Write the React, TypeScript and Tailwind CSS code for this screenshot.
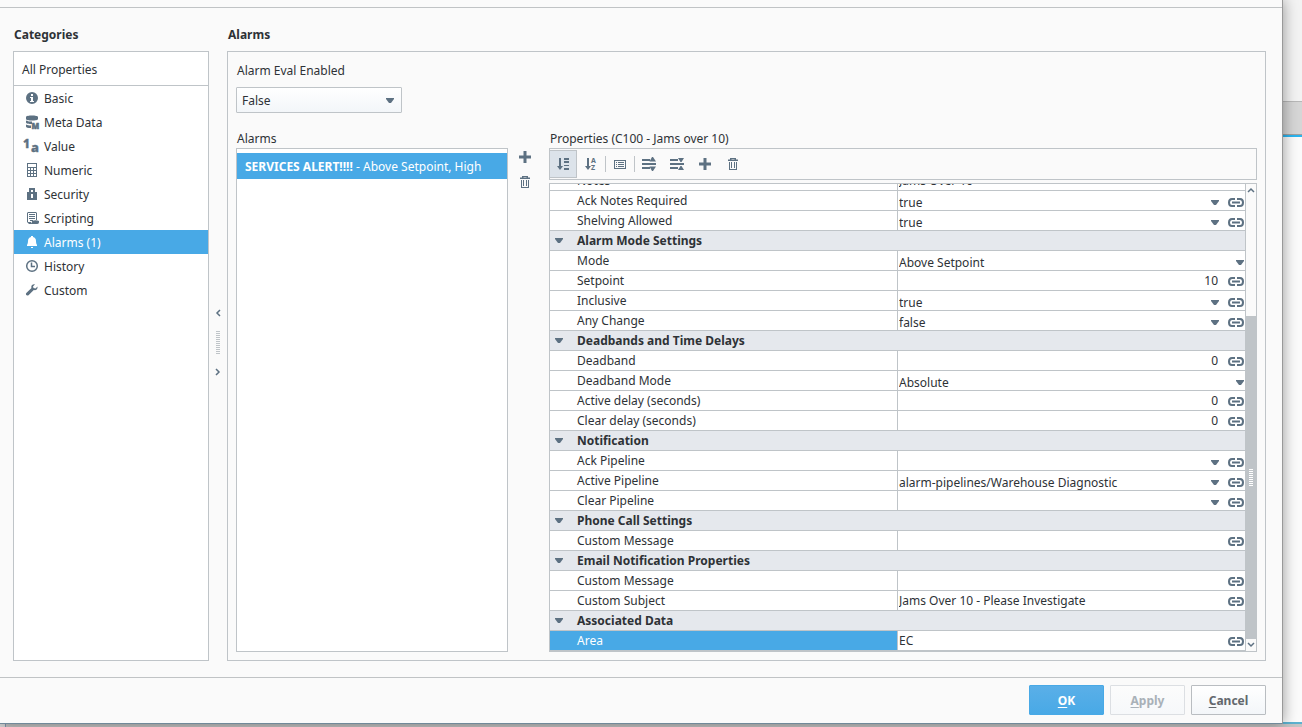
import { useState, type ReactNode } from "react";

const iconClass = "size-4 shrink-0 fill-current";

function PlusIcon() {
  return (
    <svg viewBox="0 0 16 16" className={iconClass}>
      <path d="M6.500 2h3v4.500H14v3H9.500V14h-3V9.500H2v-3h4.500z" />
    </svg>
  );
}

function TrashIcon() {
  return (
    <svg viewBox="0 0 16 16" className={iconClass}>
      <path
        fillRule="evenodd"
        d="M5 2h6v1.500h2V5H3V3.500h2zM6.500 3v.5h3V3z"
      />
      <path d="M4 6h1v7h6V6h1v8H4zM6 6h1v6H6zM9 6h1v6H9z" />
    </svg>
  );
}

function LinkIcon() {
  return (
    <svg viewBox="0 0 16 9" className="h-[9px] w-4" fill="none" stroke="#5d7182" strokeWidth="2">
      <path d="M7 1H4C2 1 1 2.500 1 4.500S2 8 4 8h3M9 1h3c2 0 3 1.500 3 3.500S14 8 12 8H9" />
      <path d="M4 4.500h8" />
    </svg>
  );
}

function CaretDown() {
  return (
    <svg viewBox="0 0 8 5" className="pointer-events-none h-[5px] w-2 shrink-0 fill-[#5d7182]">
      <path d="M0 0h8v1L5 5H3L0 1z" />
    </svg>
  );
}

function Chevron({ d }: { d: string }) {
  return (
    <svg viewBox="0 0 8 8" className="size-2" fill="none" stroke="#5d7182" strokeWidth="1.500">
      <path d={d} />
    </svg>
  );
}

const categories: { label: string; icon: ReactNode }[] = [
  {
    label: "Basic",
    icon: (
      <path
        fillRule="evenodd"
        d="M8 2a6 6 0 1 0 0 12A6 6 0 0 0 8 2zM7 4h2v2H7zM6 7h3v4h1v1H6v-1h1V8H6z"
      />
    ),
  },
  {
    label: "Meta Data",
    icon: (
      <>
        <path d="M2 3c0-2 12-2 12 0v2c0 2-12 2-12 0zM2 6.500c2 1 4 1 6 1V10c-3 0-6-.5-6-1.500zM2 10.500c1.500.8 3 1 5 1V14c-3 0-5-.5-5-1.500z" />
        <text x="7.500" y="14.500" fontSize="8" fontWeight="900" stroke="currentColor" strokeWidth=".5">
          M
        </text>
      </>
    ),
  },
  {
    label: "Value",
    icon: (
      <g fontWeight="800" stroke="currentColor" strokeWidth=".4">
        <text x="-1" y="10" fontSize="12">
          1
        </text>
        <text x="7" y="14" fontSize="13">
          a
        </text>
      </g>
    ),
  },
  {
    label: "Numeric",
    icon: (
      <path
        fillRule="evenodd"
        d="M3 1h10v14H3zM4 2v3h8V2zM4 6v2h2V6zM7 6v2h2V6zM10 6v2h2V6zM4 9v2h2V9zM7 9v2h2V9zM10 9v2h2V9zM4 12v2h2v-2zM7 12v2h2v-2zM10 12v2h2v-2z"
      />
    ),
  },
  {
    label: "Security",
    icon: <path fillRule="evenodd" d="M5 6V2h6v4h2v8H3V6zM7 6h2V4H7zM7 8v4h2V8z" />,
  },
  {
    label: "Scripting",
    icon: (
      <>
        <path fillRule="evenodd" d="M4 2h8l1 1v7h-1V3H4v9h3v2H5l-2-2V3z" />
        <path d="M5 4h6v1H5zM5 6h6v1H5zM5 8h6v1H5zM6 10h3v1H6zM8 11c2-1 5-1 7 0 0 2 0 3-2 3H6c1-1 2-1 2-3z" />
      </>
    ),
  },
  {
    label: "Alarms (1)",
    icon: <path d="M7 2h2v1c2 .5 3 2 3 4 0 2 .5 3 1 4v1H3v-1c.5-1 1-2 1-4 0-2 1-3.500 3-4zM7 13h2v1H7z" />,
  },
  {
    label: "History",
    icon: (
      <g fill="none" stroke="currentColor" strokeWidth="1.500">
        <circle cx="8" cy="8" r="5.300" />
        <path d="M7.500 4.500v4H11" />
      </g>
    ),
  },
  {
    label: "Custom",
    icon: (
      <path d="M13.500 4.500 11.500 6.500 9.500 6 9 4.500l2-2.200C9 1.800 7.300 3 7.300 4.700c0 .5 0 .8.200 1.200L2.300 11c-1.200 1.400.6 3.400 2.200 2.200l5.300-5.100c2.200.6 4.200-1.100 3.700-3.600z" />
    ),
  },
];

type Kind = "drop" | "dropOnly" | "number" | "text";
type Row = { group: string } | { name: string; kind: Kind; value: string; selected?: boolean };

const rows: Row[] = [
  { name: "Ack Notes Required", kind: "drop", value: "true" },
  { name: "Shelving Allowed", kind: "drop", value: "true" },
  { group: "Alarm Mode Settings" },
  { name: "Mode", kind: "dropOnly", value: "Above Setpoint" },
  { name: "Setpoint", kind: "number", value: "10" },
  { name: "Inclusive", kind: "drop", value: "true" },
  { name: "Any Change", kind: "drop", value: "false" },
  { group: "Deadbands and Time Delays" },
  { name: "Deadband", kind: "number", value: "0" },
  { name: "Deadband Mode", kind: "dropOnly", value: "Absolute" },
  { name: "Active delay (seconds)", kind: "number", value: "0" },
  { name: "Clear delay (seconds)", kind: "number", value: "0" },
  { group: "Notification" },
  { name: "Ack Pipeline", kind: "drop", value: "" },
  { name: "Active Pipeline", kind: "drop", value: "alarm-pipelines/Warehouse Diagnostic" },
  { name: "Clear Pipeline", kind: "drop", value: "" },
  { group: "Phone Call Settings" },
  { name: "Custom Message", kind: "text", value: "" },
  { group: "Email Notification Properties" },
  { name: "Custom Message", kind: "text", value: "" },
  { name: "Custom Subject", kind: "text", value: "Jams Over 10 - Please Investigate" },
  { group: "Associated Data" },
  { name: "Area", kind: "text", value: "EC", selected: true },
];

function ValueEditor({ id, kind, value }: { id: string; kind: Kind; value: string }) {
  const isDrop = kind === "drop" || kind === "dropOnly";
  return (
    <div className={`flex h-[19px] items-center gap-[9px] pr-px pl-px ${isDrop ? "pt-[3px]" : "pt-px"}`}>
      {isDrop ? (
        <div className="flex min-w-0 flex-1 items-center">
          <select
            id={id}
            defaultValue={value}
            className="h-[18px] min-w-0 flex-1 appearance-none pt-[2px] leading-4 outline-none"
          >
            <option>{value}</option>
          </select>
          <CaretDown />
        </div>
      ) : (
        <input
          id={id}
          defaultValue={value}
          className={`h-4 min-w-0 flex-1 leading-4 outline-none ${kind === "number" ? "pr-px text-right" : ""}`}
        />
      )}
      {kind !== "dropOnly" && (
        <button type="button" aria-label="Bind property">
          <LinkIcon />
        </button>
      )}
    </div>
  );
}

function PropertyTable() {
  return (
    <table className="w-full table-fixed border-separate border-spacing-0 bg-white">
      <tbody>
        {/* partly scrolled out of view */}
        <tr>
          <td className="border-b border-[#bfc4c8] p-0 pl-[27px]">
            <div className="flex h-[6px] items-end overflow-hidden leading-[19px]">Notes</div>
          </td>
          <td className="w-[348px] border-b border-l border-[#bfc4c8] p-0 pl-px">
            <div className="flex h-[6px] items-end overflow-hidden leading-[19px]">Jams Over 10</div>
          </td>
        </tr>
        {rows.map((row, i) =>
          "group" in row ? (
            <tr key={i} className="bg-[#e5e8ed]">
              <th colSpan={2} className="border-b border-[#bfc4c8] p-0 text-left font-bold">
                <button type="button" className="flex h-[19px] w-full items-center pl-[5px]">
                  <CaretDown />
                  <span className="pl-[14px] leading-[19px]">{row.group}</span>
                </button>
              </th>
            </tr>
          ) : (
            <tr key={i}>
              <td
                className={`border-b border-[#bfc4c8] p-0 pl-[27px] ${
                  row.selected ? "bg-[#48a9e6] text-white" : ""
                }`}
              >
                <label htmlFor={`prop-${i}`} className="block h-[19px] leading-[19px]">
                  {row.name}
                </label>
              </td>
              <td className="border-b border-l border-[#bfc4c8] p-0">
                <ValueEditor id={`prop-${i}`} kind={row.kind} value={row.value} />
              </td>
            </tr>
          )
        )}
      </tbody>
    </table>
  );
}

function Scrollbar() {
  return (
    <div className="flex w-[11px] shrink-0 flex-col border-l border-[#bfc4c8] bg-[#fafafa]">
      <button type="button" aria-label="Scroll up" className="flex h-3 items-center justify-center">
        <Chevron d="M1 6l3-3 3 3" />
      </button>
      <div className="grow-[120] basis-0" />
      <div className="-ml-px flex grow-[324] basis-0 flex-col items-center justify-center gap-px bg-[#bfc4c8]">
        {Array.from({ length: 9 }, (_, i) => (
          <span key={i} className="h-px w-1 bg-white" />
        ))}
      </div>
      <button type="button" aria-label="Scroll down" className="flex h-3 items-center justify-center">
        <Chevron d="M1 2l3 3 3-3" />
      </button>
    </div>
  );
}

const toolButton = "flex h-7 w-7 items-center justify-center";

function Toolbar() {
  return (
    <div className="flex h-8 items-center border border-[#bfc4c8] text-[#5d7182]">
      <button
        type="button"
        aria-label="Categorized"
        className="flex h-7 w-[27px] items-center justify-center border border-l-0 border-[#bfc4c8] bg-[#dce3ea]"
      >
        <svg viewBox="0 0 16 16" className={iconClass}>
          <path d="M4 2h2v8h2l-3 4-3-4h2zM9 2h5v2H9zM9 5h5v2H9zM9 9h5v1H9zM9 12h5v2H9z" />
        </svg>
      </button>
      <button type="button" aria-label="Sort alphabetically" className={toolButton}>
        <svg viewBox="0 0 16 16" className={iconClass}>
          <path d="M4 2h2v8h2l-3 4-3-4h2z" />
          <text x="8" y="7" fontSize="7" fontWeight="700">
            A
          </text>
          <text x="8" y="14" fontSize="7" fontWeight="700">
            Z
          </text>
        </svg>
      </button>
      <span className="h-4 w-px bg-[#bfc4c8]" />
      <button type="button" aria-label="Show description" className={toolButton}>
        <svg viewBox="0 0 16 16" className={iconClass}>
          <path
            fillRule="evenodd"
            d="M2 4h12v9H2zM3 5v7h10V5zM4 6h1v1H4zM6 6h6v1H6zM4 8h1v1H4zM6 8h6v1H6zM4 10h1v1H4zM6 10h6v1H6z"
          />
        </svg>
      </button>
      <span className="h-4 w-px bg-[#bfc4c8]" />
      <button type="button" aria-label="Expand all" className={toolButton}>
        <svg viewBox="0 0 16 16" className={iconClass}>
          <path d="M1 3h8v2H1zM1 7h14v2H1zM1 11h8v2H1zM8.500 5.500 11 1h1l3 4.500zM8.500 10.500H15L12 15h-1z" />
        </svg>
      </button>
      <button type="button" aria-label="Collapse all" className={toolButton}>
        <svg viewBox="0 0 16 16" className={iconClass}>
          <path d="M1 3h8v2H1zM1 7h14v2H1zM1 11h8v2H1zM9 2h6l-2.500 4h-1zM9 14l2.500-4h1l2.500 4z" />
        </svg>
      </button>
      <button type="button" aria-label="Add property" className={toolButton}>
        <PlusIcon />
      </button>
      <button type="button" aria-label="Delete property" className={toolButton}>
        <TrashIcon />
      </button>
    </div>
  );
}

function Categories() {
  const [active, setActive] = useState("Alarms (1)");

  return (
    <section className="flex w-[196px] shrink-0 flex-col pt-4 pb-4">
      <h2 className="mb-[5px] pl-px leading-[22px] font-bold">Categories</h2>
      <nav className="flex-1 border border-[#bfc4c8] bg-white">
        <button type="button" className="block h-[34px] w-full border-b border-[#bfc4c8] pt-[2px] pl-2 text-left">
          All Properties
        </button>
        {categories.map(({ label, icon }) => (
          <button
            key={label}
            type="button"
            onClick={() => setActive(label)}
            className={`flex h-6 w-full items-center gap-1 pl-[10px] ${
              active === label ? "bg-[#48a9e6] text-white" : ""
            }`}
          >
            <svg
              viewBox="0 0 16 16"
              className={`size-4 shrink-0 overflow-visible fill-current ${
                active === label ? "text-white" : "text-[#5d7182]"
              }`}
            >
              {icon}
            </svg>
            <span className="pt-[2px]">{label}</span>
          </button>
        ))}
      </nav>
    </section>
  );
}

function Splitter() {
  return (
    <div className="flex w-[18px] shrink-0 flex-col items-center justify-center gap-[14px]">
      <button type="button" aria-label="Collapse left">
        <Chevron d="M6 1L3 4l3 3" />
      </button>
      <div className="flex flex-col gap-px">
        {Array.from({ length: 12 }, (_, i) => (
          <span key={i} className="h-px w-1 bg-[#bfc4c8]" />
        ))}
      </div>
      <button type="button" aria-label="Collapse right">
        <Chevron d="M2 1l3 3-3 3" />
      </button>
    </div>
  );
}

function AlarmsPanel() {
  return (
    <section className="flex min-w-0 flex-1 flex-col pt-4 pb-4">
      <h2 className="mb-[5px] pl-px leading-[22px] font-bold">Alarms</h2>
      <div className="flex flex-1 flex-col border border-[#bfc4c8] p-2">
        <label htmlFor="eval" className="mb-[5px] pl-px leading-[22px]">
          Alarm Eval Enabled
        </label>
        <div className="mb-[15px] flex h-[26px] w-[166px] items-center rounded-[1px] border border-[#bfc4c8] bg-linear-to-b from-white to-[#f3f6f9] pr-[7px]">
          <select id="eval" defaultValue="False" className="h-6 flex-1 appearance-none pt-[2px] pl-[5px] outline-none">
            <option>False</option>
            <option>True</option>
          </select>
          <CaretDown />
        </div>

        <div className="flex flex-1">
          <div className="flex w-[272px] shrink-0 flex-col">
            <h3 className="h-5 pl-px leading-[22px]">Alarms</h3>
            <div className="flex-1 border border-[#bfc4c8] bg-white pt-1">
              <button type="button" className="h-[26px] w-full bg-[#48a9e6] pt-[2px] pl-2 text-left text-white">
                <b>SERVICES ALERT!!!!</b> - Above Setpoint, High
              </button>
            </div>
          </div>
          <div className="flex w-[41px] shrink-0 flex-col items-center gap-[9px] pt-[21px] pr-[7px] text-[#5d7182]">
            <button type="button" aria-label="Add alarm">
              <PlusIcon />
            </button>
            <button type="button" aria-label="Delete alarm">
              <TrashIcon />
            </button>
          </div>
          <div className="flex min-w-0 flex-1 flex-col">
            <h3 className="h-5 pl-px leading-[22px]">Properties (C100 - Jams over 10)</h3>
            <Toolbar />
            <div className="mt-[3px] flex flex-1 border border-[#bfc4c8]">
              <div className="min-w-0 flex-1">
                <PropertyTable />
              </div>
              <Scrollbar />
            </div>
          </div>
        </div>
      </div>
    </section>
  );
}

export default function App() {
  return (
    <div className="flex min-h-screen flex-col overflow-hidden bg-[#c4c4c4] font-['Noto_Sans',sans-serif] text-[12px] text-[#2e3236]">
      <div className="flex flex-1">
        <main className="relative z-10 flex min-w-0 flex-1 flex-col border-r border-b border-r-[#999] border-b-[#71899a] bg-[#fafafa] shadow-[0_0_14px_rgba(0,0,0,0.4)]">
          <div className="h-2 border-b border-[#c0c3c5]" />
          <div className="flex flex-1 pr-4 pl-[13px]">
            <Categories />
            <Splitter />
            <AlarmsPanel />
          </div>
          <footer className="flex justify-end gap-[6px] border-t border-[#c0c3c5] pt-[7px] pr-4 pb-2 font-bold">
            <button
              type="button"
              className="h-[30px] w-[75px] rounded-[1px] border border-[#48a9e6] bg-linear-to-b from-[#5aafe8] to-[#48a9e6] pt-[2px] text-white"
            >
              <u className="underline-offset-2">O</u>K
            </button>
            <button
              type="button"
              disabled
              className="h-[30px] w-[75px] rounded-[1px] border border-[#dcdfe3] bg-linear-to-b from-[#fcfcfc] to-[#f6f8fa] pt-[2px] text-[#a9b1b8]"
            >
              <u className="underline-offset-2">A</u>pply
            </button>
            <button
              type="button"
              className="h-[30px] w-[75px] rounded-[1px] border border-[#b9bdc1] bg-linear-to-b from-white to-[#f3f6f9] pt-[2px] text-[#63686d]"
            >
              <u className="underline-offset-2">C</u>ancel
            </button>
          </footer>
        </main>
        <aside className="flex w-[19px] shrink-0 flex-col">
          <div className="h-[101px] bg-[#f3f3f3]" />
          <div className="h-[34px] border-t border-b border-t-[#b8b8b8] border-b-[#a0a0a0] bg-[#d6d6d6]" />
          <div className="h-[2px] bg-[#2bb5f0]" />
          <div className="flex-1 bg-[#fbfbfb]" />
          <div className="h-[2px] bg-[#5cb2d0]" />
        </aside>
      </div>
      <div className="flex h-[3px]">
        <div className="w-[6px] border-r border-[#8394b0] bg-[#d8d8d8]" />
      </div>
    </div>
  );
}
